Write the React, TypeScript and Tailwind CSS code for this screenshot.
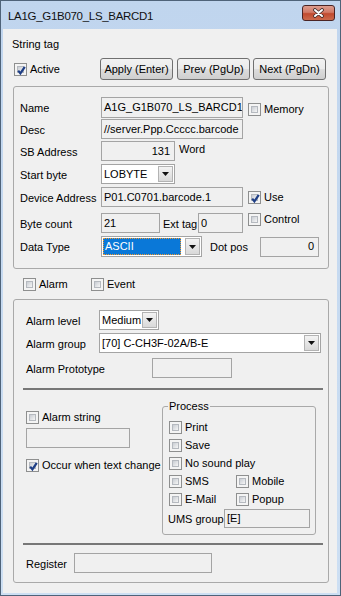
import React from 'react';

const Check: React.FC<{ checked?: boolean }> = ({ checked }) => (
  <span className="relative inline-flex w-[13px] h-[13px] shrink-0 border border-[#8e8f8f] bg-[#f4f4f4] p-[2px]">
    <span className="block w-full h-full border border-[#b5b9bf] bg-gradient-to-br from-[#c9cdd3] to-[#f6f6f6]" />
    {checked && (
      <svg className="absolute left-[1px] top-[1px]" width="11" height="11" viewBox="0 0 11 11">
        <path d="M2.2 5.6 L4.4 8.4 L8.8 1.8" stroke="#1f3f86" strokeWidth="2.2" fill="none" />
      </svg>
    )}
  </span>
);

const CheckLabel: React.FC<{ checked?: boolean; label: string; className?: string }> = ({ checked, label, className }) => (
  <div className={`flex items-center h-[13px] ${className ?? ''}`}>
    <Check checked={checked} />
    <span className="ml-[3px] leading-[13px] whitespace-nowrap">{label}</span>
  </div>
);

const Box: React.FC<{ w: string; text?: string; right?: boolean; h?: string }> = ({ w, text, right, h }) => (
  <div
    className={`${w} ${h ?? 'h-[20px]'} shrink-0 border border-[#a4a4a4] bg-[#f0f0f0] flex items-center overflow-hidden whitespace-nowrap ${
      right ? 'justify-end pr-[4px]' : 'pl-[2px]'
    }`}
  >
    {text}
  </div>
);

const DropBtn: React.FC = () => (
  <div className="w-[15px] h-full shrink-0 border border-[#b3b3b3] bg-gradient-to-b from-[#f3f3f3] to-[#d9d9d9] flex items-center justify-center">
    <svg width="7" height="4" viewBox="0 0 7 4">
      <polygon points="0,0 7,0 3.5,4" fill="#111" />
    </svg>
  </div>
);

const Combo: React.FC<{ w: string; text: string; selected?: boolean; h?: string }> = ({ w, text, selected, h }) => (
  <div className={`${w} ${h ?? 'h-[20px]'} shrink-0 border border-[#a4a4a4] bg-white flex p-[1px] gap-[1px]`}>
    {selected ? (
      <div className="flex-1 bg-[#0a78d8] border border-dotted border-[#f39a2c] text-white flex items-center pl-[1px] mr-[3px]">
        {text}
      </div>
    ) : (
      <div className="flex-1 min-w-0 bg-white flex items-center pl-[1px] whitespace-nowrap">{text}</div>
    )}
    <DropBtn />
  </div>
);

const Btn: React.FC<{ label: string; className?: string }> = ({ label, className }) => (
  <div
    className={`w-[73px] h-[22px] rounded-[3px] border border-[#707070] bg-[linear-gradient(to_bottom,#f2f2f2_0%,#ebebeb_48%,#dddddd_52%,#cfcfcf_100%)] flex items-center justify-center whitespace-nowrap ${className ?? ''}`}
  >
    {label}
  </div>
);

const Row: React.FC<{ label: string; lw: string; className?: string; children?: React.ReactNode }> = ({
  label,
  lw,
  className,
  children,
}) => (
  <div className={`flex items-center ${className ?? ''}`}>
    <div className={`${lw} shrink-0 pt-[2px] whitespace-nowrap`}>{label}</div>
    {children}
  </div>
);

export default function App() {
  return (
    <div className="w-[341px] h-[596px] bg-[linear-gradient(to_bottom,#c0d5ee,#cddff3)] border border-[#4f6379] flex flex-col font-['Liberation_Sans',Arial,sans-serif] text-[11px] text-black">
      {/* title bar */}
      <div className="h-[28px] flex items-start shrink-0">
        <div className="ml-[7px] mt-[8px] text-[11.5px] leading-[14px] tracking-[-0.3px] text-[#111]">
          LA1G_G1B070_LS_BARCD1
        </div>
        <div className="ml-auto mr-[5px] mt-[4px] w-[33px] h-[16px] rounded-[3px] border border-[#4a2424] bg-[linear-gradient(to_bottom,#dd9c8e_0%,#d27a66_45%,#c14a2f_55%,#cc6a4c_100%)] flex items-center justify-center">
          <svg width="13" height="10" viewBox="0 0 13 10">
            <path d="M3 2 L10 8 M10 2 L3 8" stroke="#3b2b2b" strokeWidth="3.6" strokeLinecap="round" />
            <path d="M3 2 L10 8 M10 2 L3 8" stroke="#ffffff" strokeWidth="2" strokeLinecap="round" />
          </svg>
        </div>
      </div>

      {/* client area */}
      <div className="flex-1 ml-[2px] mr-[3px] mb-[2px] bg-[#f0f0f0] flex flex-col">
        <div className="ml-[9px] mt-[8px] h-[14px] leading-[14px]">String tag</div>

        <div className="mt-[7px] h-[22px] flex items-center">
          <div className="w-[86px] ml-[11px] flex items-center">
            <CheckLabel checked label="Active" />
          </div>
          <Btn label="Apply (Enter)" />
          <Btn label="Prev (PgUp)" className="ml-[4px]" />
          <Btn label="Next (PgDn)" className="ml-[3px]" />
        </div>

        {/* main group */}
        <div className="mt-[6px] ml-[10px] w-[316px] h-[183px] shrink-0 border border-[#a9a9a9] rounded-[3px] pt-[10px] pl-[6px]">
          <Row label="Name" lw="w-[81px]" className="h-[21px]">
            <Box w="w-[142px]" h="h-[21px]" text="A1G_G1B070_LS_BARCD1" />
            <CheckLabel label="Memory" className="ml-[5px] self-start mt-[6px]" />
          </Row>
          <Row label="Desc" lw="w-[81px]" className="h-[20px] mt-[1px]">
            <Box w="w-[142px]" text="//server.Ppp.Ccccc.barcode" />
          </Row>
          <Row label="SB Address" lw="w-[81px]" className="h-[20px] mt-[2px]">
            <Box w="w-[74px]" text="131" right />
            <span className="ml-[4px] -mt-[3px]">Word</span>
          </Row>
          <Row label="Start byte" lw="w-[81px]" className="h-[20px] mt-[3px]">
            <Combo w="w-[74px]" text="LOBYTE" />
          </Row>
          <Row label="Device Address" lw="w-[81px]" className="h-[20px] mt-[3px]">
            <Box w="w-[142px]" text="P01.C0701.barcode.1" />
            <CheckLabel checked label="Use" className="ml-[5px]" />
          </Row>
          <Row label="Byte count" lw="w-[81px]" className="h-[20px] mt-[6px]">
            <Box w="w-[59px]" text="21" />
            <span className="ml-[3px] w-[35px] shrink-0 pt-[2px] whitespace-nowrap">Ext tag</span>
            <Box w="w-[45px]" text="0" />
            <CheckLabel label="Control" className="ml-[5px] self-start" />
          </Row>
          <Row label="Data Type" lw="w-[81px]" className="h-[21px] mt-[3px]">
            <Combo w="w-[101px]" h="h-[21px]" text="ASCII" selected />
            <span className="ml-[8px] w-[50px] pt-[1px] whitespace-nowrap">Dot pos</span>
            <Box w="w-[59px]" text="0" right />
          </Row>
        </div>

        <div className="mt-[9px] h-[13px] flex items-center">
          <CheckLabel label="Alarm" className="ml-[20px] w-[68px]" />
          <CheckLabel label="Event" />
        </div>

        {/* alarm group */}
        <div className="mt-[8px] ml-[10px] w-[316px] h-[284px] shrink-0 border border-[#a9a9a9] rounded-[3px] pt-[10px] pl-[12px] flex flex-col">
          <Row label="Alarm level" lw="w-[73px]" className="h-[20px]">
            <Combo w="w-[60px]" text="Medium" />
          </Row>
          <Row label="Alarm group" lw="w-[73px]" className="h-[20px] mt-[3px]">
            <Combo w="w-[222px]" text="[70] C-CH3F-02A/B-E" />
          </Row>
          <Row label="Alarm Prototype" lw="w-[126px]" className="h-[20px] mt-[5px]">
            <Box w="w-[80px]" />
          </Row>
          <div className="mt-[10px] -ml-[3px] w-[300px] h-[2px] bg-[#777777]" />

          <div className="flex items-start">
            <div className="w-[136px] shrink-0 flex flex-col mt-[21px]">
              <CheckLabel label="Alarm string" />
              <div className="mt-[4px]">
                <Box w="w-[104px]" />
              </div>
              <CheckLabel checked label="Occur when text change" className="mt-[11px]" />
            </div>
            <fieldset className="mt-[10px] w-[154px] border border-[#a9a9a9] rounded-[3px] pl-[6px] pr-[4px] pb-[6px]">
              <legend className="-ml-[1px] px-[1px] leading-[13px]">Process</legend>
              <div className="flex flex-col gap-[5px] mt-[8px]">
                <CheckLabel label="Print" />
                <CheckLabel label="Save" />
                <CheckLabel label="No sound play" />
                <div className="flex">
                  <CheckLabel label="SMS" className="w-[67px]" />
                  <CheckLabel label="Mobile" />
                </div>
                <div className="flex">
                  <CheckLabel label="E-Mail" className="w-[67px]" />
                  <CheckLabel label="Popup" />
                </div>
                <div className="flex items-center -ml-[1px] -mt-[2px]">
                  <span className="w-[56px] shrink-0 pt-[1px] whitespace-nowrap">UMS group</span>
                  <Box w="w-[86px]" h="h-[19px]" text="[E]" />
                </div>
              </div>
            </fieldset>
          </div>

          <div className="mt-[8px] -ml-[3px] w-[300px] h-[2px] bg-[#777777]" />
          <Row label="Register" lw="w-[48px]" className="h-[20px] mt-[8px]">
            <Box w="w-[138px]" />
          </Row>
        </div>
      </div>
    </div>
  );
}
